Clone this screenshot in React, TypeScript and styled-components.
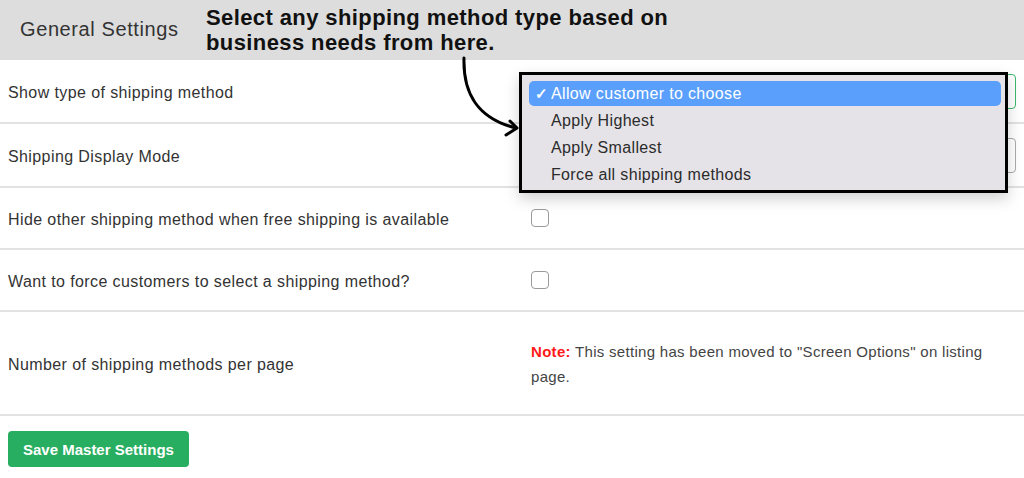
import React from "react";
import styled, { createGlobalStyle } from "styled-components";

const GlobalStyle = createGlobalStyle`
  html, body {
    margin: 0;
    padding: 0;
    background: #ffffff;
  }
  body {
    font-family: "Liberation Sans", Arial, Helvetica, sans-serif;
    color: #333333;
  }
`;

const Page = styled.div`
  position: relative;
  width: 1024px;
  height: 478px;
  overflow: hidden;
  background: #ffffff;
`;

const Header = styled.div`
  height: 60px;
  background: #dddddd;
  display: flex;
  align-items: center;
  padding: 0 20px;
  box-sizing: border-box;
`;

const Title = styled.h2`
  margin: 0 0 2px;
  font-size: 20px;
  font-weight: normal;
  letter-spacing: 0.6px;
  color: #333333;
`;

const Callout = styled.div`
  position: absolute;
  left: 206px;
  top: 5px;
  font-size: 22px;
  line-height: 25px;
  font-weight: bold;
  letter-spacing: 0.4px;
  color: #111111;
`;

const Row = styled.div<{ $height: number }>`
  display: grid;
  grid-template-columns: 522px 1fr;
  align-items: center;
  box-sizing: border-box;
  height: ${(p) => p.$height}px;
  border-bottom: 2px solid #e2e2e2;
`;

const Label = styled.div`
  padding: 3px 0 0 8px;
  font-size: 16px;
  letter-spacing: 0.4px;
  color: #333333;
`;

const Value = styled.div`
  padding: 0 8px;
  display: flex;
  align-items: center;
`;

const Select = styled.div<{ $focused?: boolean }>`
  width: 100%;
  height: 35px;
  box-sizing: border-box;
  border: 1px solid ${(p) => (p.$focused ? "#3cb86b" : "#aaaaaa")};
  border-radius: 4px;
  background: #ffffff;
`;

const Checkbox = styled.span`
  display: inline-block;
  width: 18px;
  height: 18px;
  box-sizing: border-box;
  border: 1.5px solid #9a9a9a;
  border-radius: 4px;
  margin-left: 1px;
`;

const Note = styled.p`
  margin: 0;
  max-width: 470px;
  padding: 2px 0 0 1px;
  font-size: 15px;
  line-height: 25px;
  letter-spacing: 0.3px;
  color: #444444;
`;

const NoteTag = styled.span`
  color: #ff1a1a;
  font-weight: bold;
`;

const Footer = styled.div`
  padding: 15px 8px;
`;

const SaveButton = styled.button`
  height: 36px;
  padding: 0 15px;
  border: none;
  border-radius: 4px;
  background: #27ae60;
  color: #ffffff;
  font-family: inherit;
  font-size: 15px;
  font-weight: bold;
  cursor: pointer;
`;

const Menu = styled.ul`
  position: absolute;
  left: 519px;
  top: 72px;
  width: 489px;
  height: 121px;
  box-sizing: border-box;
  margin: 0;
  padding: 6px 4px 0 7px;
  list-style: none;
  background: #e5e3e8;
  border: 3px solid #000000;
  box-shadow: 0 6px 14px rgba(0, 0, 0, 0.18);
`;

const MenuItem = styled.li<{ $selected?: boolean }>`
  position: relative;
  height: 25px;
  margin-bottom: 2px;
  padding: 1px 0 0 22px;
  box-sizing: border-box;
  display: flex;
  align-items: center;
  font-size: 16px;
  letter-spacing: 0.35px;
  border-radius: 5px;
  color: ${(p) => (p.$selected ? "#ffffff" : "#2b2b2b")};
  background: ${(p) => (p.$selected ? "#5a9ffc" : "transparent")};
`;

const Check = styled.span`
  position: absolute;
  left: 6px;
  font-size: 15px;
  font-weight: bold;
`;

const Arrow = styled.svg`
  position: absolute;
  left: 0;
  top: 0;
  pointer-events: none;
`;

const options = [
  "Allow customer to choose",
  "Apply Highest",
  "Apply Smallest",
  "Force all shipping methods",
];

export default function App() {
  return (
    <Page>
      <GlobalStyle />
      <Header>
        <Title>General Settings</Title>
      </Header>
      <Row $height={64}>
        <Label>Show type of shipping method</Label>
        <Value>
          <Select $focused />
        </Value>
      </Row>
      <Row $height={64}>
        <Label>Shipping Display Mode</Label>
        <Value>
          <Select />
        </Value>
      </Row>
      <Row $height={62}>
        <Label>Hide other shipping method when free shipping is available</Label>
        <Value>
          <Checkbox />
        </Value>
      </Row>
      <Row $height={62}>
        <Label>Want to force customers to select a shipping method?</Label>
        <Value>
          <Checkbox />
        </Value>
      </Row>
      <Row $height={104}>
        <Label>Number of shipping methods per page</Label>
        <Value>
          <Note>
            <NoteTag>Note:</NoteTag> This setting has been moved to "Screen
            Options" on listing page.
          </Note>
        </Value>
      </Row>
      <Footer>
        <SaveButton>Save Master Settings</SaveButton>
      </Footer>

      <Callout>
        Select any shipping method type based on
        <br />
        business needs from here.
      </Callout>
      <Menu>
        {options.map((o, i) => (
          <MenuItem key={o} $selected={i === 0}>
            {i === 0 && <Check>✓</Check>}
            {o}
          </MenuItem>
        ))}
      </Menu>
      <Arrow width="1024" height="478" viewBox="0 0 1024 478">
        <path
          d="M464 58 C 463 92, 476 118, 516 128"
          fill="none"
          stroke="#000"
          strokeWidth="3"
          strokeLinecap="round"
        />
        <path
          d="M510 121 L517 128 L506 135"
          fill="none"
          stroke="#000"
          strokeWidth="3"
          strokeLinecap="round"
          strokeLinejoin="round"
        />
      </Arrow>
    </Page>
  );
}
